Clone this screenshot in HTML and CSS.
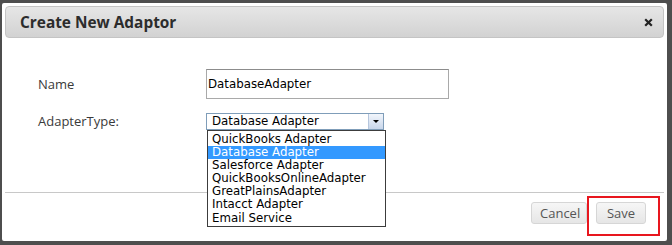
FILE: index.html
```html
<!DOCTYPE html>
<html lang="en">
<head>
    <meta charset="UTF-8">
    <title>Create New Adaptor</title>
    <link rel="stylesheet" href="styles.css">
</head>
<body>
    <div class="modal">
        <!-- Header -->
        <div class="modal-header">
            <h3>Create New Adaptor</h3>
            <svg class="close" width="9" height="9" viewBox="0 0 9 9"><path d="M1.2 1.2L7.8 7.8M7.8 1.2L1.2 7.8" stroke="#222" stroke-width="2.2"/></svg>
        </div>

        <!-- Form -->
        <div class="modal-body">
            <div class="row">
                <label>Name</label>
                <div class="text-input">DatabaseAdapter</div>
            </div>
            <div class="row">
                <label>AdapterType:</label>
                <div class="select">
                    <span class="select-value">Database Adapter</span>
                    <span class="select-arrow"></span>
                    <ul class="select-list">
                        <li>QuickBooks Adapter</li>
                        <li class="selected">Database Adapter</li>
                        <li>Salesforce Adapter</li>
                        <li>QuickBooksOnlineAdapter</li>
                        <li>GreatPlainsAdapter</li>
                        <li>Intacct Adapter</li>
                        <li>Email Service</li>
                    </ul>
                </div>
            </div>
        </div>

        <!-- Footer -->
        <div class="modal-footer">
            <button class="btn">Cancel</button>
            <button class="btn save">Save</button>
        </div>
    </div>
</body>
</html>
```

FILE: styles.css
```css
* { margin: 0; padding: 0; box-sizing: border-box; }
body { background: #4e4e4e; font-family: 'Open Sans', sans-serif; color: #333; padding: 3px 5px 4px 2px; }
.modal { background: #fff; height: 238px; padding: 3px; display: flex; flex-direction: column; border-radius: 2px; }
.modal-header { height: 32px; display: flex; align-items: center; justify-content: space-between; padding: 0 10px 0 14px; border: 1px solid #c4c4c4; border-radius: 4px; background: linear-gradient(#e6e6e6, #d2d2d2); }
.modal-header h3 { font-size: 15.4px; font-weight: bold; color: #2c2c2c; }
.close { display: block; }
.modal-body { flex: 1; padding: 31px 0 0 33px; display: flex; flex-direction: column; gap: 13px; }
.row { display: flex; align-items: center; }
.row label { width: 168px; font-size: 13px; color: #3a3a3a; }
.text-input { width: 243px; height: 30px; border: 1px solid #a9a9a9; border-top-color: #8c8c8c; padding: 0 1px; font-family: 'DejaVu Sans', sans-serif; font-size: 11.8px; color: #000; line-height: 28px; }
.select { position: relative; width: 178px; height: 17px; border: 1px solid #7f9db9; font-family: 'DejaVu Sans', sans-serif; font-size: 11.8px; color: #000; display: flex; align-items: center; }
.select-value { flex: 1; padding-left: 5px; line-height: 15px; }
.select-arrow { width: 15px; height: 15px; background: linear-gradient(#f2f6fc, #c8d6ea); border-left: 1px solid #b6c6dd; position: relative; }
.select-arrow::after { content: ''; position: absolute; left: 4px; top: 6px; border-left: 3px solid transparent; border-right: 3px solid transparent; border-top: 3px solid #000; }
.select-list { position: absolute; top: 16px; left: 0; width: 179px; list-style: none; background: #fff; border: 1px solid #3c3c3c; padding: 2px 0 1px; z-index: 2; }
.select-list li { height: 13.2px; line-height: 13px; padding-left: 4px; white-space: nowrap; }
.select-list li.selected { background: #3399ff; color: #fff; }
.modal-footer { height: 46px; border-top: 1px solid #c8c8c8; display: flex; justify-content: flex-end; align-items: flex-start; gap: 9px; padding: 9px 18px 0 0; }
.btn { height: 22px; padding: 0 8px; border: 1px solid #d6d6d6; border-radius: 3px; background: linear-gradient(#f6f6f6, #e6e6e6); font-family: 'Open Sans', sans-serif; font-size: 13px; color: #555; }
.btn:first-child { width: 56px; }
.save { width: 50px; position: relative; }
.save::after { content: ''; position: absolute; left: -10px; top: -7px; width: 69px; height: 36px; border: 2px solid #e8161e; }
```
